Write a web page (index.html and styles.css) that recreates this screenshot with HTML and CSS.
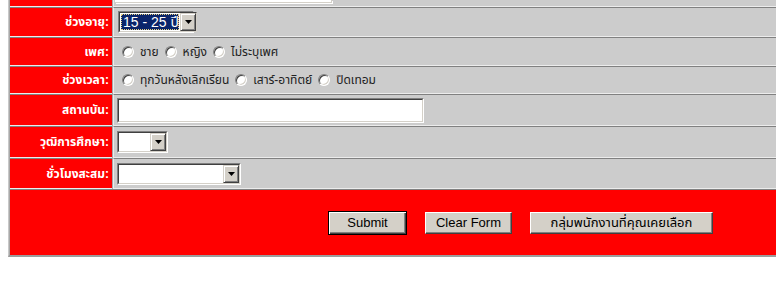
FILE: index.html
```html
<!DOCTYPE html>
<html lang="th">
<head>
<meta charset="utf-8">
<title>Form</title>
<link rel="stylesheet" href="styles.css">
</head>
<body>
<form class="form">
  <div class="lbl r0"></div>
  <div class="val r0"><div class="inp-frag"></div></div>

  <div class="lbl">ช่วงอายุ:</div>
  <div class="val">
    <span class="sel sel-age"><span class="sel-in"><select class="sel-box hl"><option>15 - 25 ปี</option></select><span class="arrow"><svg width="7" height="4" viewBox="0 0 7 4"><polygon points="0,0 7,0 3.5,4" fill="#000"/></svg></span></span></span>
  </div>

  <div class="lbl">เพศ:</div>
  <div class="val">
    <label class="opt first"><input type="radio" name="sex" class="radio"><span>ชาย</span></label>
    <label class="opt"><input type="radio" name="sex" class="radio"><span>หญิง</span></label>
    <label class="opt"><input type="radio" name="sex" class="radio"><span>ไม่ระบุเพศ</span></label>
  </div>

  <div class="lbl">ช่วงเวลา:</div>
  <div class="val">
    <label class="opt first"><input type="radio" name="time" class="radio"><span>ทุกวันหลังเลิกเรียน</span></label>
    <label class="opt"><input type="radio" name="time" class="radio"><span>เสาร์-อาทิตย์</span></label>
    <label class="opt"><input type="radio" name="time" class="radio"><span>ปิดเทอม</span></label>
  </div>

  <div class="lbl">สถานบัน:</div>
  <div class="val">
    <span class="txt"><input type="text" class="txt-in"></span>
  </div>

  <div class="lbl">วุฒิการศึกษา:</div>
  <div class="val">
    <span class="sel sel-edu"><span class="sel-in"><select class="sel-box"><option></option></select><span class="arrow"><svg width="7" height="4" viewBox="0 0 7 4"><polygon points="0,0 7,0 3.5,4" fill="#000"/></svg></span></span></span>
  </div>

  <div class="lbl">ชั่วโมงสะสม:</div>
  <div class="val">
    <span class="sel sel-hrs"><span class="sel-in"><select class="sel-box"><option></option></select><span class="arrow"><svg width="7" height="4" viewBox="0 0 7 4"><polygon points="0,0 7,0 3.5,4" fill="#000"/></svg></span></span></span>
  </div>

  <div class="btnrow">
    <button type="button" class="btn btn-def">Submit</button>
    <button type="button" class="btn btn-clear">Clear Form</button>
    <button type="button" class="btn btn-group">กลุ่มพนักงานที่คุณเคยเลือก</button>
  </div>
</form>
</body>
</html>
```

FILE: styles.css
```css
html, body {
  margin: 0;
  padding: 0;
  background: #fff;
  overflow: hidden;
}

body {
  font-family: "Liberation Sans", "Noto Sans Thai", "Noto Sans", sans-serif;
}

.form {
  display: grid;
  grid-template-columns: 102px 1fr;
  grid-template-rows: 7px 30px 29px 28px 32px 32px 31px 66px;
  column-gap: 1px;
  width: 768px;
  margin: 0 0 0 8px;
  box-sizing: border-box;
  border-left: 1px solid #c8c8c8;
  border-bottom: 2px solid #9c9c9c;
  padding-left: 1px;
  background: #a8a8a8;
}

.lbl,
.val {
  box-sizing: border-box;
  border-top: 1px solid #808080;
  border-bottom: 1px solid #ececec;
  display: flex;
  align-items: center;
  min-width: 0;
  overflow: hidden;
}

.lbl {
  background: #f00;
  color: #fff;
  font-weight: bold;
  font-size: 12px;
  justify-content: flex-end;
  padding-right: 3px;
  white-space: nowrap;
}

.val {
  background: #ccc;
  border-left: 1px solid #ececec;
  padding-left: 3px;
  font-size: 12px;
  color: #222;
  white-space: nowrap;
}

.r0 {
  border-top: 0;
}

.val.r0 {
  align-items: flex-start;
  padding-left: 1px;
}

.inp-frag {
  width: 216px;
  height: 2px;
  background: #fff;
  border-bottom: 1px solid #d4d0c8;
  border-right: 1px solid #d4d0c8;
  box-shadow: 1px 1px 0 #fff;
}

/* select */
.sel {
  display: inline-flex;
  box-sizing: border-box;
  height: 22px;
  border: 1px solid;
  border-color: #808080 #fff #fff #808080;
  background: #fff;
}

.sel-in {
  display: flex;
  flex: 1;
  border: 1px solid;
  border-color: #404040 #d4d0c8 #d4d0c8 #404040;
  background: #fff;
}

.sel-box {
  appearance: none;
  -webkit-appearance: none;
  flex: 1;
  min-width: 0;
  margin: 1px;
  padding: 0 0 0 2px;
  border: 0;
  outline: 0;
  background: #fff;
  font-family: "Liberation Sans", "Noto Sans Thai", "Noto Sans", sans-serif;
  font-size: 14px;
  line-height: 14px;
  color: #000;
}

.sel-box.hl {
  background: #0a246a;
  color: #fff;
  outline: 1px dotted #e6d080;
  outline-offset: -1px;
}

.arrow {
  box-sizing: border-box;
  width: 16px;
  display: flex;
  align-items: center;
  justify-content: center;
  background: #d4d0c8;
  border: 1px solid;
  border-color: #d4d0c8 #404040 #404040 #d4d0c8;
  box-shadow: inset 1px 1px 0 #fff, inset -1px -1px 0 #808080;
}

.sel-age {
  width: 76px;
  margin-left: 1px;
}

.sel-edu {
  width: 51px;
}

.sel-hrs {
  width: 124px;
}

/* radios */
.opt {
  display: inline-flex;
  align-items: center;
  gap: 6px;
  margin-left: 6px;
}

.opt.first {
  margin-left: 5px;
}

.radio {
  appearance: none;
  -webkit-appearance: none;
  box-sizing: border-box;
  width: 12px;
  height: 12px;
  margin: 0;
  border-radius: 50%;
  background: #fff;
  border: 1px solid;
  border-color: #808080 #fff #fff #808080;
  box-shadow: inset 1px 1px 0 #404040, inset -1px -1px 0 #d4d0c8;
}

/* text input */
.txt {
  display: inline-flex;
  box-sizing: border-box;
  width: 307px;
  height: 25px;
  border: 1px solid;
  border-color: #808080 #fff #fff #808080;
}

.txt-in {
  flex: 1;
  min-width: 0;
  margin: 0;
  padding: 0 2px;
  border: 1px solid;
  border-color: #404040 #d4d0c8 #d4d0c8 #404040;
  background: #fff;
  outline: 0;
}

/* buttons */
.btnrow {
  grid-column: 1 / -1;
  box-sizing: border-box;
  background: #f00;
  border-top: 1px solid #808080;
  display: flex;
  justify-content: flex-start;
  align-items: center;
  gap: 18px;
  padding-left: 318px;
}

.btn {
  box-sizing: border-box;
  height: 22px;
  margin: 0;
  padding: 0;
  background: #d4d0c8;
  border: 1px solid;
  border-color: #fff #404040 #404040 #fff;
  box-shadow: inset -1px -1px 0 #808080;
  font-family: "Liberation Sans", "Noto Sans Thai", "Noto Sans", sans-serif;
  font-size: 13px;
  color: #000;
  flex: none;
}

.btn-def {
  width: 79px;
  height: 24px;
  border: 1px solid #000;
  box-shadow: inset 1px 1px 0 #fff, inset -1px -1px 0 #404040, inset -2px -2px 0 #808080;
}

.btn-clear {
  width: 87px;
}

.btn-group {
  width: 183px;
}
```
